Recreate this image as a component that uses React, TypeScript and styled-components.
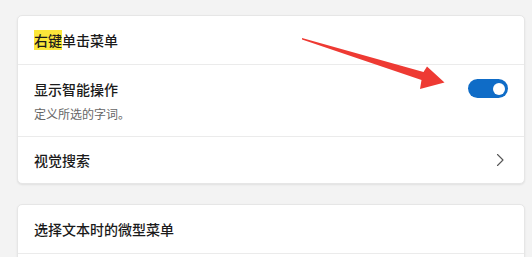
import React from "react";
import styled, { createGlobalStyle } from "styled-components";

const Global = createGlobalStyle`
  html, body { margin: 0; padding: 0; background: #f3f3f3; }
  body { font-family: "Noto Sans CJK SC", "Noto Sans", sans-serif; color: #1b1b1b; }
`;

const Page = styled.div`
  position: relative;
  width: 532px;
  height: 257px;
  overflow: hidden;
  box-sizing: border-box;
  padding: 15px 7px 0 17px;
  display: flex;
  flex-direction: column;
  gap: 20px;
`;

const Card = styled.section`
  background: #ffffff;
  border: 1px solid #e6e6e6;
  border-radius: 5px;
  box-shadow: 0 1px 2px rgba(0, 0, 0, 0.08);
  display: flex;
  flex-direction: column;
`;

const Row = styled.div<{ $h?: number; $top?: boolean }>`
  display: flex;
  align-items: ${(p) => (p.$top ? "flex-start" : "center")};
  justify-content: space-between;
  box-sizing: border-box;
  min-height: ${(p) => p.$h ?? 48}px;
  padding: ${(p) => (p.$top ? "14px 16px 13px" : "0 16px")};
  & + & { border-top: 1px solid #ebebeb; }
`;

const Texts = styled.div`
  display: flex;
  flex-direction: column;
`;

const Title = styled.div<{ $weight?: number }>`
  font-size: 14px;
  line-height: 20px;
  font-weight: ${(p) => p.$weight ?? 500};
  color: #1b1b1b;
`;

const Desc = styled.div`
  margin-top: 6px;
  font-size: 12px;
  line-height: 18px;
  color: #666666;
`;

const Mark = styled.span`
  background: #fbe73a;
  padding: 0;
`;

const Toggle = styled.div<{ $on: boolean }>`
  width: 40px;
  height: 19px;
  border-radius: 10px;
  background: ${(p) => (p.$on ? "#0f6cc7" : "#ffffff")};
  display: flex;
  align-items: center;
  justify-content: ${(p) => (p.$on ? "flex-end" : "flex-start")};
  padding: 0 3px;
  box-sizing: border-box;
`;

const Knob = styled.div`
  width: 12px;
  height: 12px;
  border-radius: 50%;
  background: #ffffff;
`;

const Chevron = styled.svg`
  width: 16px;
  height: 16px;
`;

const Overlay = styled.svg`
  position: absolute;
  left: 0;
  top: 0;
  pointer-events: none;
`;

export default function App() {
  return (
    <>
      <Global />
      <Page>
        <Card>
          <Row $h={48}>
            <Title>
              <Mark>右键</Mark>单击菜单
            </Title>
          </Row>
          <Row $top>
            <Texts>
              <Title>显示智能操作</Title>
              <Desc>定义所选的字词。</Desc>
            </Texts>
            <Toggle $on>
              <Knob />
            </Toggle>
          </Row>
          <Row $h={47}>
            <Title>视觉搜索</Title>
            <Chevron viewBox="0 0 16 16">
              <path d="M5.5 2.5 L11 8 L5.5 13.5" fill="none" stroke="#555" strokeWidth="1.1" strokeLinecap="round" strokeLinejoin="round" />
            </Chevron>
          </Row>
        </Card>
        <Card>
          <Row $h={48}>
            <Title>选择文本时的微型菜单</Title>
          </Row>
          <Row $h={20} />
        </Card>
      </Page>
      <Overlay width="532" height="257" viewBox="0 0 532 257">
        <polygon
          points="302,38 423.5,72 427,66.5 444.5,82.5 420,89 421.5,80 302,39.6"
          fill="#ee3a33"
        />
      </Overlay>
    </>
  );
}
